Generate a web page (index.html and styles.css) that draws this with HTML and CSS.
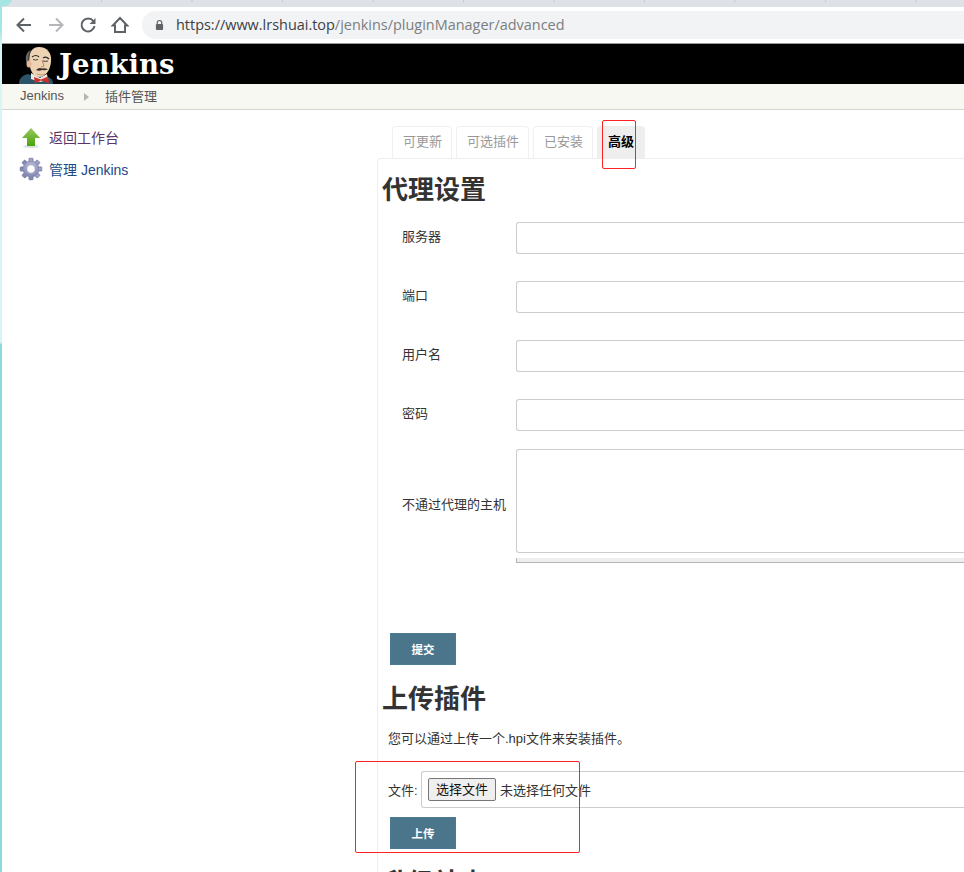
FILE: index.html
```html
<!DOCTYPE html>
<html lang="zh">
<head>
<meta charset="utf-8">
<title>Jenkins</title>
<link rel="stylesheet" href="styles.css">
</head>
<body>
<div class="strip"></div>
<div class="window">
  <div class="tabstrip"></div>
  <div class="toolbar">
    <svg class="nav" viewBox="0 0 20 20"><path d="M17 10H4.500M10 3.500 3.500 10l6.500 6.500" fill="none" stroke="#5f6368" stroke-width="2"/></svg>
    <svg class="nav" viewBox="0 0 20 20"><path d="M3 10h12.500M10 3.500l6.500 6.500-6.500 6.500" fill="none" stroke="#b4b6b9" stroke-width="2"/></svg>
    <svg class="nav" viewBox="0 0 20 20"><path d="M15.300 6A6.500 6.500 0 1 0 16.500 11" fill="none" stroke="#5f6368" stroke-width="2"/><path d="M17.500 3v6h-6z" fill="#5f6368"/></svg>
    <svg class="nav" viewBox="0 0 20 20"><path d="M10 3 2.800 10.500H5V17h10v-6.500h2.200z" fill="none" stroke="#5f6368" stroke-width="2" stroke-linejoin="miter"/></svg>
    <div class="omnibox">
      <svg class="lock" viewBox="0 0 10 12"><path d="M2.500 5V3.500a2.500 2.500 0 0 1 5 0V5" fill="none" stroke="#5f6368" stroke-width="1.300"/><rect x="1" y="5" width="8" height="6.500" rx="1" fill="#5f6368"/></svg>
      <span class="url"><span class="url-main">https://www.lrshuai.top</span>/jenkins/pluginManager/advanced</span>
    </div>
  </div>
  <header class="brand">
    <svg class="butler" viewBox="0 0 44 40">
      <path d="M3 40c0-6 4-9 9-10l8 3 8-1c6 1 9 3 9 8z" fill="#2c5468"/>
      <path d="M15 29l9 5 7-4 1 6-8 2-9-3z" fill="#eeeae0"/>
      <path d="M18 33l7 2.500 7-3 1 6.500h-1l-7-2.500-6 3z" fill="#c9302c"/>
      <path d="M13 19C12 9 16 3 23 3c8 0 13 6 12 15-1 8-5 15-12 15-5 0-8-4-10-14z" fill="#edd2b4"/>
      <path d="M13 23C8 17 9 8 15 6c-1 4-2 7-2 10 0 3 1 5 0 7z" fill="#6e6a66"/>
      <path d="M15 6C13 8 12.500 14 13 19" fill="none" stroke="#2a2a2a" stroke-width="1"/>
      <ellipse cx="13" cy="20" rx="2.500" ry="3.500" fill="#e2b898"/>
      <path d="M16 13q4-3 7 0M27 14q3-2 6 1" fill="none" stroke="#2a2a2a" stroke-width="1.200"/>
      <path d="M17 15.500q2.500 1 5 0M27 17q2 .8 5 0" fill="none" stroke="#444" stroke-width="1"/>
      <path d="M20 26q3-3 6-1.500 3-1 6 1-3 1-6 .5-3 1.500-6 0z" fill="#3a2d25"/>
      <path d="M26 16l2 6-3 1" fill="none" stroke="#b88a6c" stroke-width="1"/>
      <path d="M21 30q4 2 8 0" fill="none" stroke="#b88a6c" stroke-width=".8"/>
    </svg>
    <span class="wordmark">Jenkins</span>
  </header>
  <nav class="crumbs">
    <span class="crumb">Jenkins</span>
    <svg class="crumb-sep" viewBox="0 0 5 8"><path d="M0 0l5 4-5 4z" fill="#b5b5b5"/></svg>
    <span class="crumb">插件管理</span>
  </nav>
  <div class="body">
    <aside class="side">
      <div class="task">
        <svg class="task-icon" viewBox="0 0 24 24"><defs><linearGradient id="arrowFill" x1="0" y1="0" x2="0" y2="1"><stop offset="0" stop-color="#97c95f"/><stop offset="1" stop-color="#4aa30c"/></linearGradient><radialGradient id="gearFill" cx=".5" cy=".4" r=".6"><stop offset="0" stop-color="#d8d9ea"/><stop offset=".6" stop-color="#9da2c8"/><stop offset="1" stop-color="#7d80aa"/></radialGradient></defs><ellipse cx="12" cy="21.500" rx="8" ry="1.500" fill="#ddd"/><path d="M12 3 3 13h5v8h8v-8h5z" fill="url(#arrowFill)"/></svg>
        <span class="task-link visited">返回工作台</span>
      </div>
      <div class="task">
        <svg class="task-icon" viewBox="0 0 24 24"><g fill="url(#gearFill)" stroke="#8688ad" stroke-width=".5"><rect x="9.800" y="1" width="4.400" height="22" rx="1"/><rect x="9.800" y="1" width="4.400" height="22" rx="1" transform="rotate(45 12 12)"/><rect x="9.800" y="1" width="4.400" height="22" rx="1" transform="rotate(90 12 12)"/><rect x="9.800" y="1" width="4.400" height="22" rx="1" transform="rotate(135 12 12)"/><circle cx="12" cy="12" r="8"/></g><circle cx="12" cy="12" r="4.200" fill="#fff" stroke="#8688ad" stroke-width=".6"/></svg>
        <span class="task-link">管理 Jenkins</span>
      </div>
    </aside>
    <main class="main">
      <div class="tabs">
        <span class="tab">可更新</span>
        <span class="tab">可选插件</span>
        <span class="tab">已安装</span>
        <span class="tab active">高级</span>
      </div>
      <div class="pane">
        <h1 class="title first">代理设置</h1>
        <div class="form">
          <label class="field-label">服务器</label><div class="input"></div>
          <label class="field-label">端口</label><div class="input"></div>
          <label class="field-label">用户名</label><div class="input"></div>
          <label class="field-label">密码</label><div class="input"></div>
          <label class="field-label field-label-tall">不通过代理的主机</label>
          <div>
            <div class="textarea"></div>
            <div class="grip"><span class="grip-lines"></span></div>
          </div>
        </div>
        <button class="btn submit">提交</button>
        <h1 class="title">上传插件</h1>
        <p class="hint">您可以通过上传一个.hpi文件来安装插件。</p>
        <div class="file-row">
          <span class="file-label">文件:</span>
          <div class="file-box"><span class="file-btn">选择文件</span><span class="file-none">未选择任何文件</span></div>
        </div>
        <button class="btn upload">上传</button>
        <h1 class="title site">升级站点</h1>
      </div>
    </main>
  </div>
</div>
<div class="note note-tab"></div>
<div class="note note-file"></div>
</body>
</html>
```
FILE: styles.css
```css
* { box-sizing: border-box; }
html, body { margin: 0; height: 872px; overflow: hidden; background: #fff; }
body {
  display: flex;
  font-family: "Liberation Sans", "Noto Sans CJK SC", sans-serif;
  font-size: 13px;
  color: #333;
  position: relative;
}
.strip {
  width: 2px;
  flex: none;
  background: linear-gradient(#a5e6e4 0, #a5e6e4 30px, #d9f4f4 45px, #d9f4f4 342px, #8cdada 345px, #8cdada 100%);
}
.window { flex: 1; min-width: 0; overflow: hidden; }
.tabstrip {
  height: 7px;
  position: relative;
  background: linear-gradient(90deg, #c6c9ce 1px, transparent 1px) 8.500px 0 / 90.500px 2px repeat-x, #dee1e6;
}
.tabstrip::before {
  content: "";
  position: absolute;
  left: -2px;
  top: 0;
  width: 11px;
  height: 6px;
  background: #a5e6e4;
  border-bottom-right-radius: 8px;
}
.toolbar {
  height: 37px;
  display: flex;
  align-items: center;
  padding: 0 0 1px 12px;
  background: #fff;
  border-bottom: 1px solid #9a9a9a;
}
.nav { width: 20px; height: 20px; margin-right: 12px; flex: none; }
.omnibox {
  flex: 1;
  height: 28px;
  background: #f1f3f4;
  border-radius: 14px 0 0 14px;
  display: flex;
  align-items: center;
  padding-left: 13px;
}
.lock { width: 9px; height: 12px; flex: none; margin-right: 12px; }
.url { font-family: "Open Sans", sans-serif; font-size: 14.450px; color: #7b7e82; white-space: nowrap; }
.url-main { color: #3c4043; }
.brand {
  height: 40px;
  background: #000;
  display: flex;
  align-items: flex-end;
  padding-left: 14px;
  overflow: hidden;
}
.butler { width: 44px; height: 40px; flex: none; }
.wordmark {
  font-family: "DejaVu Serif", serif;
  font-weight: 700;
  font-size: 27.500px;
  line-height: 40px;
  height: 40px;
  color: #fff;
  margin-left: -1px;
}
.crumbs {
  height: 26px;
  background: #f6f8f1;
  border-bottom: 1px solid #d3d7cf;
  display: flex;
  align-items: center;
  padding: 0 0 2px 18px;
}
.crumb { color: #555; font-size: 13px; }
.crumb-sep { width: 5px; height: 8px; margin: 2px 16px 0 20px; }
.body { display: flex; }
.side { width: 375px; flex: none; padding: 11px 0 0 17px; }
.task { display: flex; align-items: center; height: 32px; }
.task-icon { width: 24px; height: 24px; flex: none; margin-right: 6px; }
.task-link { font-size: 14px; color: #204a87; }
.task-link.visited { color: #5c3566; }
.main { flex: 1; min-width: 0; }
.tabs { display: flex; gap: 4px; height: 48px; padding: 16px 0 0 15px; }
.tab {
  height: 32px;
  padding: 0 9px 0 10px;
  border: 1px solid #f0f0f0;
  border-bottom: 0;
  border-radius: 4px 4px 0 0;
  color: #999;
  line-height: 29px;
  white-space: nowrap;
}
.tab.active {
  padding: 0 10px;
  background: #eee;
  border-color: #eee;
  color: #000;
  font-weight: 700;
}
.pane {
  border: 1px solid #eee;
  border-right: 0;
  border-bottom: 0;
  border-radius: 4px 0 0 0;
  height: 800px;
  padding-left: 4px;
}
.title {
  margin: 0;
  font-size: 26px;
  font-weight: 700;
  line-height: 36px;
  color: #333;
  white-space: nowrap;
}
.title.first { margin-top: 13px; }
.form {
  display: grid;
  grid-template-columns: 114px 1fr;
  grid-template-rows: 41px 41px 41px 32px auto;
  row-gap: 18px;
  align-items: start;
  margin-top: 14px;
  padding-left: 20px;
  width: 600px;
}
.field-label { font-size: 13px; line-height: 30px; color: #333; white-space: nowrap; }
.field-label-tall { align-self: center; margin-bottom: 2px; }
.input {
  height: 32px;
  border: 1px solid #ccc;
  border-radius: 3px 0 0 3px;
  border-right: 0;
  background: #fff;
}
.textarea {
  height: 104px;
  border: 1px solid #ccc;
  border-right: 0;
  border-radius: 3px 0 0 3px;
}
.grip {
  height: 5px;
  margin-top: 5px;
  background: #eee;
  border-left: 1px solid #b5b5b5;
  border-bottom: 1px solid #b5b5b5;
  position: relative;
}
.grip-lines {
  position: absolute;
  right: 0;
  top: 0;
  width: 14px;
  height: 3px;
  border-top: 1px solid #999;
  border-bottom: 1px solid #999;
}
.btn {
  display: block;
  width: 66px;
  height: 32px;
  padding: 0 0 1px;
  margin-left: 8px;
  background: #4b758b;
  border: 1px solid #4a7a94;
  color: #fff;
  font-family: inherit;
  font-size: 11.500px;
  font-weight: 700;
}
.submit { margin-top: 70px; }
.submit + .title { margin-top: 16px; }
.hint { margin: 0; padding: 13px 0 0 6px; line-height: 18px; font-size: 13px; }
.file-row { display: flex; align-items: center; margin-top: 23px; padding-left: 6px; }
.file-label { width: 33px; flex: none; }
.file-box {
  flex: 1;
  height: 37px;
  border: 1px solid #ccc;
  border-right: 0;
  border-radius: 3px 0 0 3px;
  display: flex;
  align-items: center;
  padding-left: 6px;
}
.file-btn {
  width: 68px;
  height: 23px;
  line-height: 21px;
  text-align: center;
  background: #efefef;
  border: 1px solid #767676;
  border-radius: 2px;
  color: #111;
  flex: none;
}
.file-none { margin-left: 4px; color: #333; white-space: nowrap; }
.upload { margin-top: 9px; }
.title.site { margin-top: 16px; }
.note { position: absolute; border: 1px solid #f22; border-radius: 2px; pointer-events: none; }
.note-tab { left: 602px; top: 120px; width: 34px; height: 49px; }
.note-file { left: 355px; top: 761px; width: 225px; height: 92px; }
```
